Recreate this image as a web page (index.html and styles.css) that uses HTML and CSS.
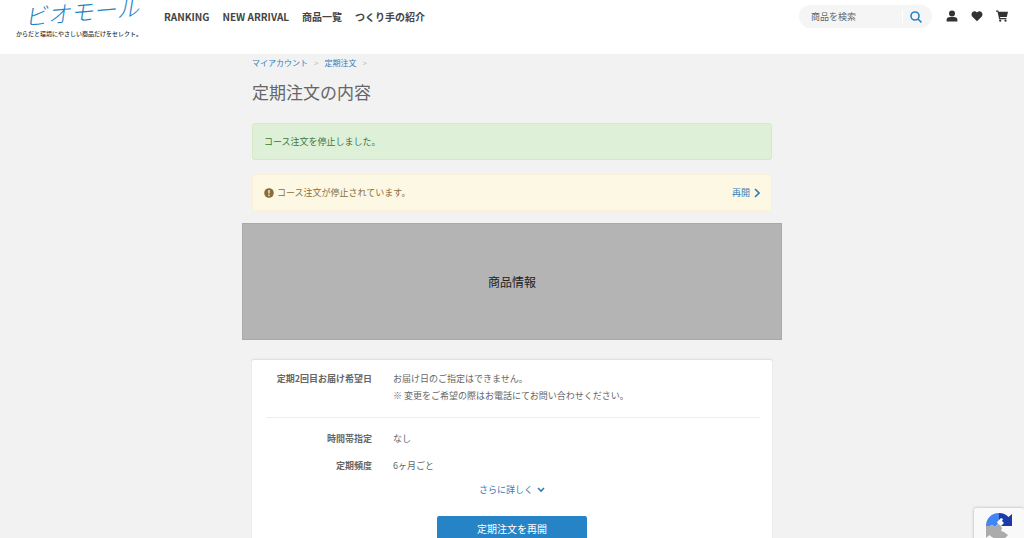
FILE: index.html
```html
<!DOCTYPE html>
<html lang="ja">
<head>
    <meta charset="UTF-8">
    <meta name="viewport" content="width=device-width, initial-scale=1.0">
    <title>定期注文の内容</title>
    <link rel="stylesheet" href="styles.css">
</head>
<body>
    <header class="site-header">
        <a href="#" class="brand">
            <span class="brand-logo">ビオモール</span>
            <span class="brand-tagline">からだと環境にやさしい商品だけをセレクト。</span>
        </a>
        <nav class="main-nav">
            <a href="#">RANKING</a>
            <a href="#">NEW ARRIVAL</a>
            <a href="#">商品一覧</a>
            <a href="#">つくり手の紹介</a>
        </nav>
        <form class="search">
            <input type="search" class="search-input" placeholder="商品を検索" aria-label="商品を検索">
            <button type="submit" class="search-button" aria-label="検索">
                <svg width="12" height="12" viewBox="0 0 12 12" fill="none" stroke="currentColor" stroke-width="1.600">
                    <circle cx="5" cy="5" r="4"/>
                    <path d="M8 8l3.400 3.400"/>
                </svg>
            </button>
        </form>
        <div class="header-icons">
            <a href="#" aria-label="マイページ">
                <svg width="12" height="12" viewBox="0 0 12 12" fill="currentColor">
                    <circle cx="6" cy="3.400" r="3"/>
                    <path d="M.6 11.500V9.800C.6 8 2.200 7 4 7h4c1.800 0 3.400 1 3.400 2.800v1.700z"/>
                </svg>
            </a>
            <a href="#" aria-label="お気に入り">
                <svg width="12" height="12" viewBox="0 0 12 12" fill="currentColor">
                    <path d="M6 11.200L1.400 6.700C.1 5.400.3 3 1.600 1.900 3 .8 4.800 1.100 6 2.600 7.200 1.100 9 .8 10.400 1.900c1.300 1.100 1.500 3.500.2 4.800z"/>
                </svg>
            </a>
            <a href="#" aria-label="カート">
                <svg width="12" height="12" viewBox="0 0 12 12" fill="currentColor">
                    <path d="M0 .5h2.300l.4 1.200H12L10.800 7H4l.2 1.100h6.200v1.100H3.200L1.500 1.700H0z"/>
                    <circle cx="4.200" cy="10.700" r="1.100"/>
                    <circle cx="9.500" cy="10.700" r="1.100"/>
                </svg>
            </a>
        </div>
    </header>

    <main class="container">
        <nav class="breadcrumb" aria-label="パンくず">
            <a href="#">マイアカウント</a>
            <span>&gt;</span>
            <a href="#">定期注文</a>
            <span>&gt;</span>
        </nav>
        <h1>定期注文の内容</h1>

        <div class="alert alert-success">コース注文を停止しました。</div>
        <div class="alert alert-warning">
            <svg width="10" height="10" viewBox="0 0 10 10">
                <circle cx="5" cy="5" r="4.800" fill="currentColor"/>
                <path d="M5 2v3.500M5 6.600v1.300" stroke="#fcf8e3" stroke-width="1.300"/>
            </svg>
            <span>コース注文が停止されています。</span>
            <a href="#" class="alert-link">再開
                <svg width="6" height="10" viewBox="0 0 6 10" fill="none" stroke="currentColor" stroke-width="1.600">
                    <path d="M1 1l4 4-4 4"/>
                </svg>
            </a>
        </div>

        <section class="product-info">商品情報</section>

        <section class="card">
            <dl class="details">
                <dt>定期2回目お届け希望日</dt>
                <dd>お届け日のご指定はできません。<br>※ 変更をご希望の際はお電話にてお問い合わせください。</dd>
            </dl>
            <hr>
            <dl class="details">
                <dt>時間帯指定</dt>
                <dd>なし</dd>
                <dt>定期頻度</dt>
                <dd>6ヶ月ごと</dd>
            </dl>
            <a href="#" class="more">さらに詳しく
                <svg width="8" height="6" viewBox="0 0 8 6" fill="none" stroke="currentColor" stroke-width="1.600">
                    <path d="M1 1l3 3 3-3"/>
                </svg>
            </a>
            <button type="button" class="resume-button">定期注文を再開</button>
        </section>
    </main>

    <!-- reCAPTCHA badge -->
    <div class="captcha-badge">
        <svg width="28" height="28" viewBox="0 0 28 28">
            <path fill="#1c3aa9" d="M14 1c4 0 7 1.500 9.500 4L27 2v12H16l3-3-2-2 1-2-2-1-2 2z"/>
            <path fill="#4285f4" d="M14 1v7l-2 2 1 2-3 3-3-2-2 1H1C1 7 6 1 14 1z"/>
            <path fill="#ababab" d="M1 14h4l2-1 3 2 3-3 2 1 2 3-1 3 3 1 4 3c-2 3-5 4-9 4-4 0-7-1.500-9.500-4L1 26z"/>
        </svg>
    </div>
</body>
</html>
```
FILE: styles.css
```css
* {
    box-sizing: border-box;
}
body {
    margin: 0;
    background-color: #f2f2f2;
    color: #666;
    font-family: "Noto Sans CJK JP", sans-serif;
    font-size: 9px;
    line-height: 17px;
}
a {
    color: #337ab7;
    text-decoration: none;
}
svg {
    display: block;
    flex-shrink: 0;
}

/* Header */
.site-header {
    display: flex;
    align-items: flex-start;
    height: 54px;
    padding: 0 16px;
    background-color: #fff;
}
.brand {
    display: flex;
    flex-direction: column;
    width: 148px;
    white-space: nowrap;
}
.brand-logo {
    padding-left: 8px;
    color: #2684c6;
    font-size: 23px;
    font-style: italic;
    font-weight: 300;
    line-height: 20px;
    transform: rotate(-5deg);
}
.brand-tagline {
    margin-top: 8px;
    color: #333;
    font-size: 6px;
    font-weight: 500;
    line-height: 12px;
}
.main-nav {
    display: flex;
    gap: 13px;
    padding-top: 8px;
    font-size: 10px;
    font-weight: bold;
    white-space: nowrap;
}
.main-nav a {
    color: #444;
}
.search {
    display: flex;
    align-items: center;
    width: 133px;
    height: 23px;
    margin: 5px 14px 0 auto;
    border-radius: 12px;
    background-color: #f5f5f5;
}
.search-input {
    flex: 1;
    min-width: 0;
    height: 13px;
    padding: 0 0 0 12px;
    border: 0;
    border-right: 1px solid #fff;
    background: none;
    font-family: inherit;
    font-size: 9px;
}
.search-input::placeholder {
    color: #666;
}
.search-button {
    padding: 0 10px 0 7px;
    border: 0;
    background: none;
    color: #2684c6;
}
.header-icons {
    display: flex;
    gap: 13px;
    padding-top: 10px;
}
.header-icons a {
    color: #333;
}

/* Main column */
.container {
    max-width: 540px;
    margin: 0 auto;
    padding: 0 10px;
}
.breadcrumb {
    display: flex;
    gap: 6px;
    font-size: 8px;
}
.breadcrumb span {
    color: #bbb;
}
h1 {
    margin: 8px 0 18px;
    font-size: 17px;
    font-weight: normal;
    line-height: 26px;
}

.alert {
    display: flex;
    align-items: center;
    gap: 3px;
    min-height: 37px;
    margin-bottom: 14px;
    padding: 0 11px;
    border: 1px solid;
    border-radius: 3px;
}
.alert-success {
    border-color: #d6e9c6;
    background-color: #dff0d8;
    color: #3c763d;
}
.alert-warning {
    margin-bottom: 12px;
    border-color: #faf0d8;
    background-color: #fcf8e3;
    color: #8a6d3b;
}
.alert-link {
    display: flex;
    align-items: center;
    gap: 4px;
    margin-left: auto;
}

.product-info {
    display: flex;
    align-items: center;
    justify-content: center;
    height: 117px;
    margin: 0 -10px 20px;
    border: 1px solid #a9a9a9;
    background-color: #b4b4b4;
    color: #222;
    font-size: 12px;
}

.card {
    padding: 10px 10px 24px;
    border-radius: 2px;
    background-color: #fff;
    box-shadow: 0 -1px 2px rgba(0, 0, 0, 0.1);
}
.card hr {
    margin: 13px 2px 12px 4px;
    border: 0;
    border-top: 1px solid #eee;
}
.details {
    display: grid;
    grid-template-columns: 110px 1fr;
    gap: 10px 21px;
    margin: 0;
}
.details dt {
    font-weight: bold;
    text-align: right;
}
.details dd {
    margin: 0;
}
.more {
    display: flex;
    align-items: center;
    justify-content: center;
    gap: 4px;
    margin: 7px 0 18px;
}
.resume-button {
    display: block;
    width: 150px;
    height: 25px;
    margin: 0 auto;
    padding: 0;
    border: 0;
    border-radius: 2px;
    background-color: #2684c6;
    color: #fff;
    font-family: inherit;
    font-size: 10px;
}

.captcha-badge {
    position: fixed;
    right: 0;
    bottom: -30px;
    width: 50px;
    height: 60px;
    padding: 4px 11px;
    border-radius: 2px;
    background-color: #f9f9f9;
    box-shadow: 0 0 3px #aaa;
}
```
